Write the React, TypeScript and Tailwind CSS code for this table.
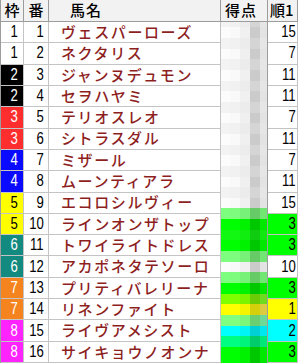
import React from "react";

type Row = { w: number; n: number; name: string; r: number };

const rows: Row[] = [
  { w: 1, n: 1, name: "ヴェスパーローズ", r: 15 },
  { w: 1, n: 2, name: "ネクタリス", r: 7 },
  { w: 2, n: 3, name: "ジャンヌデュモン", r: 11 },
  { w: 2, n: 4, name: "セヲハヤミ", r: 11 },
  { w: 3, n: 5, name: "テリオスレオ", r: 7 },
  { w: 3, n: 6, name: "シトラスダル", r: 11 },
  { w: 4, n: 7, name: "ミザール", r: 7 },
  { w: 4, n: 8, name: "ムーンティアラ", r: 11 },
  { w: 5, n: 9, name: "エコロシルヴィー", r: 15 },
  { w: 5, n: 10, name: "ラインオンザトップ", r: 3 },
  { w: 6, n: 11, name: "トワイライトドレス", r: 3 },
  { w: 6, n: 12, name: "アカポネタテソーロ", r: 10 },
  { w: 7, n: 13, name: "プリティバレリーナ", r: 3 },
  { w: 7, n: 14, name: "リネンファイト", r: 1 },
  { w: 8, n: 15, name: "ライヴアメシスト", r: 2 },
  { w: 8, n: 16, name: "サイキョウノオンナ", r: 3 },
];

const frameCls: Record<number, string> = {
  1: "bg-white text-black",
  2: "bg-black text-white",
  3: "bg-[#ff2e2e] text-white",
  4: "bg-[#0a0aff] text-white",
  5: "bg-[#ffff00] text-black",
  6: "bg-[#138a80] text-white",
  7: "bg-[#f5841f] text-white",
  8: "bg-[#ff24ff] text-white",
};

const rankCls = (r: number) =>
  r === 1 ? "bg-[#ffff00]" : r === 2 ? "bg-[#00ffff]" : r === 3 ? "bg-[#00ff00]" : "bg-white";

type K = "n" | "g" | "y" | "c";
const kindOf = (r: number): K => (r === 1 ? "y" : r === 2 ? "c" : r === 3 ? "g" : "n");

const centers: Record<K, string[]> = {
  n: ["#fcfcfc", "#f9f9f9", "#f0f0f0", "#cbcbcb", "#e3e3e3"],
  g: ["#00ff00", "#00ff00", "#00f200", "#00c800", "#00e800"],
  y: ["#ffff00", "#ffff00", "#f5f500", "#d6cf0c", "#dccb40"],
  c: ["#00ffff", "#00ffff", "#00f4f4", "#00cfd6", "#00e6ee"],
};
const nBound = ["#f3f3f3", "#f1f1f1", "#ececec", "#d5d5d5", "#e6e6e6"];
const gBound = ["#12f812", "#12f812", "#10ee10", "#10cc10", "#10e810"];

const hex = (s: string) => [1, 3, 5].map((i) => parseInt(s.slice(i, i + 2), 16));
const mix = (a: string, b: string) => {
  const x = hex(a);
  const y = hex(b);
  return (
    "#" +
    x
      .map((v, i) => Math.round((v + y[i]) / 2).toString(16).padStart(2, "0"))
      .join("")
  );
};

const boundary = (a: K, b: K) => {
  if (a === b) return a === "n" ? nBound : a === "g" ? gBound : centers[a];
  return centers[a].map((c, i) => mix(c, centers[b][i]));
};

const strips: string[][] = [];
{
  const kinds = rows.map((r) => kindOf(r.r));
  strips.push(nBound);
  kinds.forEach((k, i) => {
    strips.push(centers[k]);
    if (i < kinds.length - 1) strips.push(boundary(k, kinds[i + 1]));
  });
  strips.push(centers[kinds[kinds.length - 1]]);
}

function Num({ v }: { v: number }) {
  return (
    <span className="inline-block origin-right scale-x-[0.82] font-['Liberation_Sans',Arial,sans-serif] text-[16px] leading-none">
      {v}
    </span>
  );
}

const jp = "font-['Noto_Sans_CJK_JP','Noto_Sans',sans-serif]";
const vb = "border-r border-[#9c9c9c]";
const hb = "border-b border-[#c4c4c4]";
const head = `flex items-center bg-[#f2f2f2] text-[15px] font-medium text-black border-r border-b border-[#9c9c9c] ${jp}`;

export default function App() {
  return (
    <div className="w-[300px] h-[363px] bg-white overflow-hidden">
      <div className="grid w-[297px] h-[363px] grid-cols-[23px_25px_172px_47px_30px] grid-rows-[22px_repeat(16,1fr)] border-l border-[#9c9c9c]">
        <div className={`${head} justify-center`}>枠</div>
        <div className={`${head} justify-center`}>番</div>
        <div className={`${head} pl-[21px] tracking-[1px]`}>馬名</div>
        <div className={`${head} pl-[4px] tracking-[1px]`}>得点</div>
        <div className={`${head} pl-[2px]`}>順1</div>

        <div className={`col-start-4 row-start-2 row-span-16 grid grid-rows-[1fr_repeat(31,2fr)_1fr] ${vb}`}>
          {strips.map((s, i) => (
            <div key={i} className="grid grid-cols-[9px_10px_10px_10px_1fr]">
              {s.map((c, j) => (
                <div key={j} style={{ backgroundColor: c }} />
              ))}
            </div>
          ))}
        </div>

        {rows.map((r) => (
          <React.Fragment key={r.n}>
            <div className={`flex items-center justify-end pr-[5px] ${frameCls[r.w]} ${vb} ${hb}`}>
              <Num v={r.w} />
            </div>
            <div className={`flex items-center justify-end pr-[4px] text-black ${vb} ${hb}`}>
              <Num v={r.n} />
            </div>
            <div
              className={`flex items-center pl-[12px] text-[15px] font-medium tracking-[1.6px] text-[#8e1f1f] whitespace-nowrap overflow-hidden ${jp} ${vb} ${hb}`}
            >
              {r.name}
            </div>
            <div className={`flex items-center justify-end pr-[1px] text-black ${rankCls(r.r)} ${vb} ${hb}`}>
              <Num v={r.r} />
            </div>
          </React.Fragment>
        ))}
      </div>
    </div>
  );
}
